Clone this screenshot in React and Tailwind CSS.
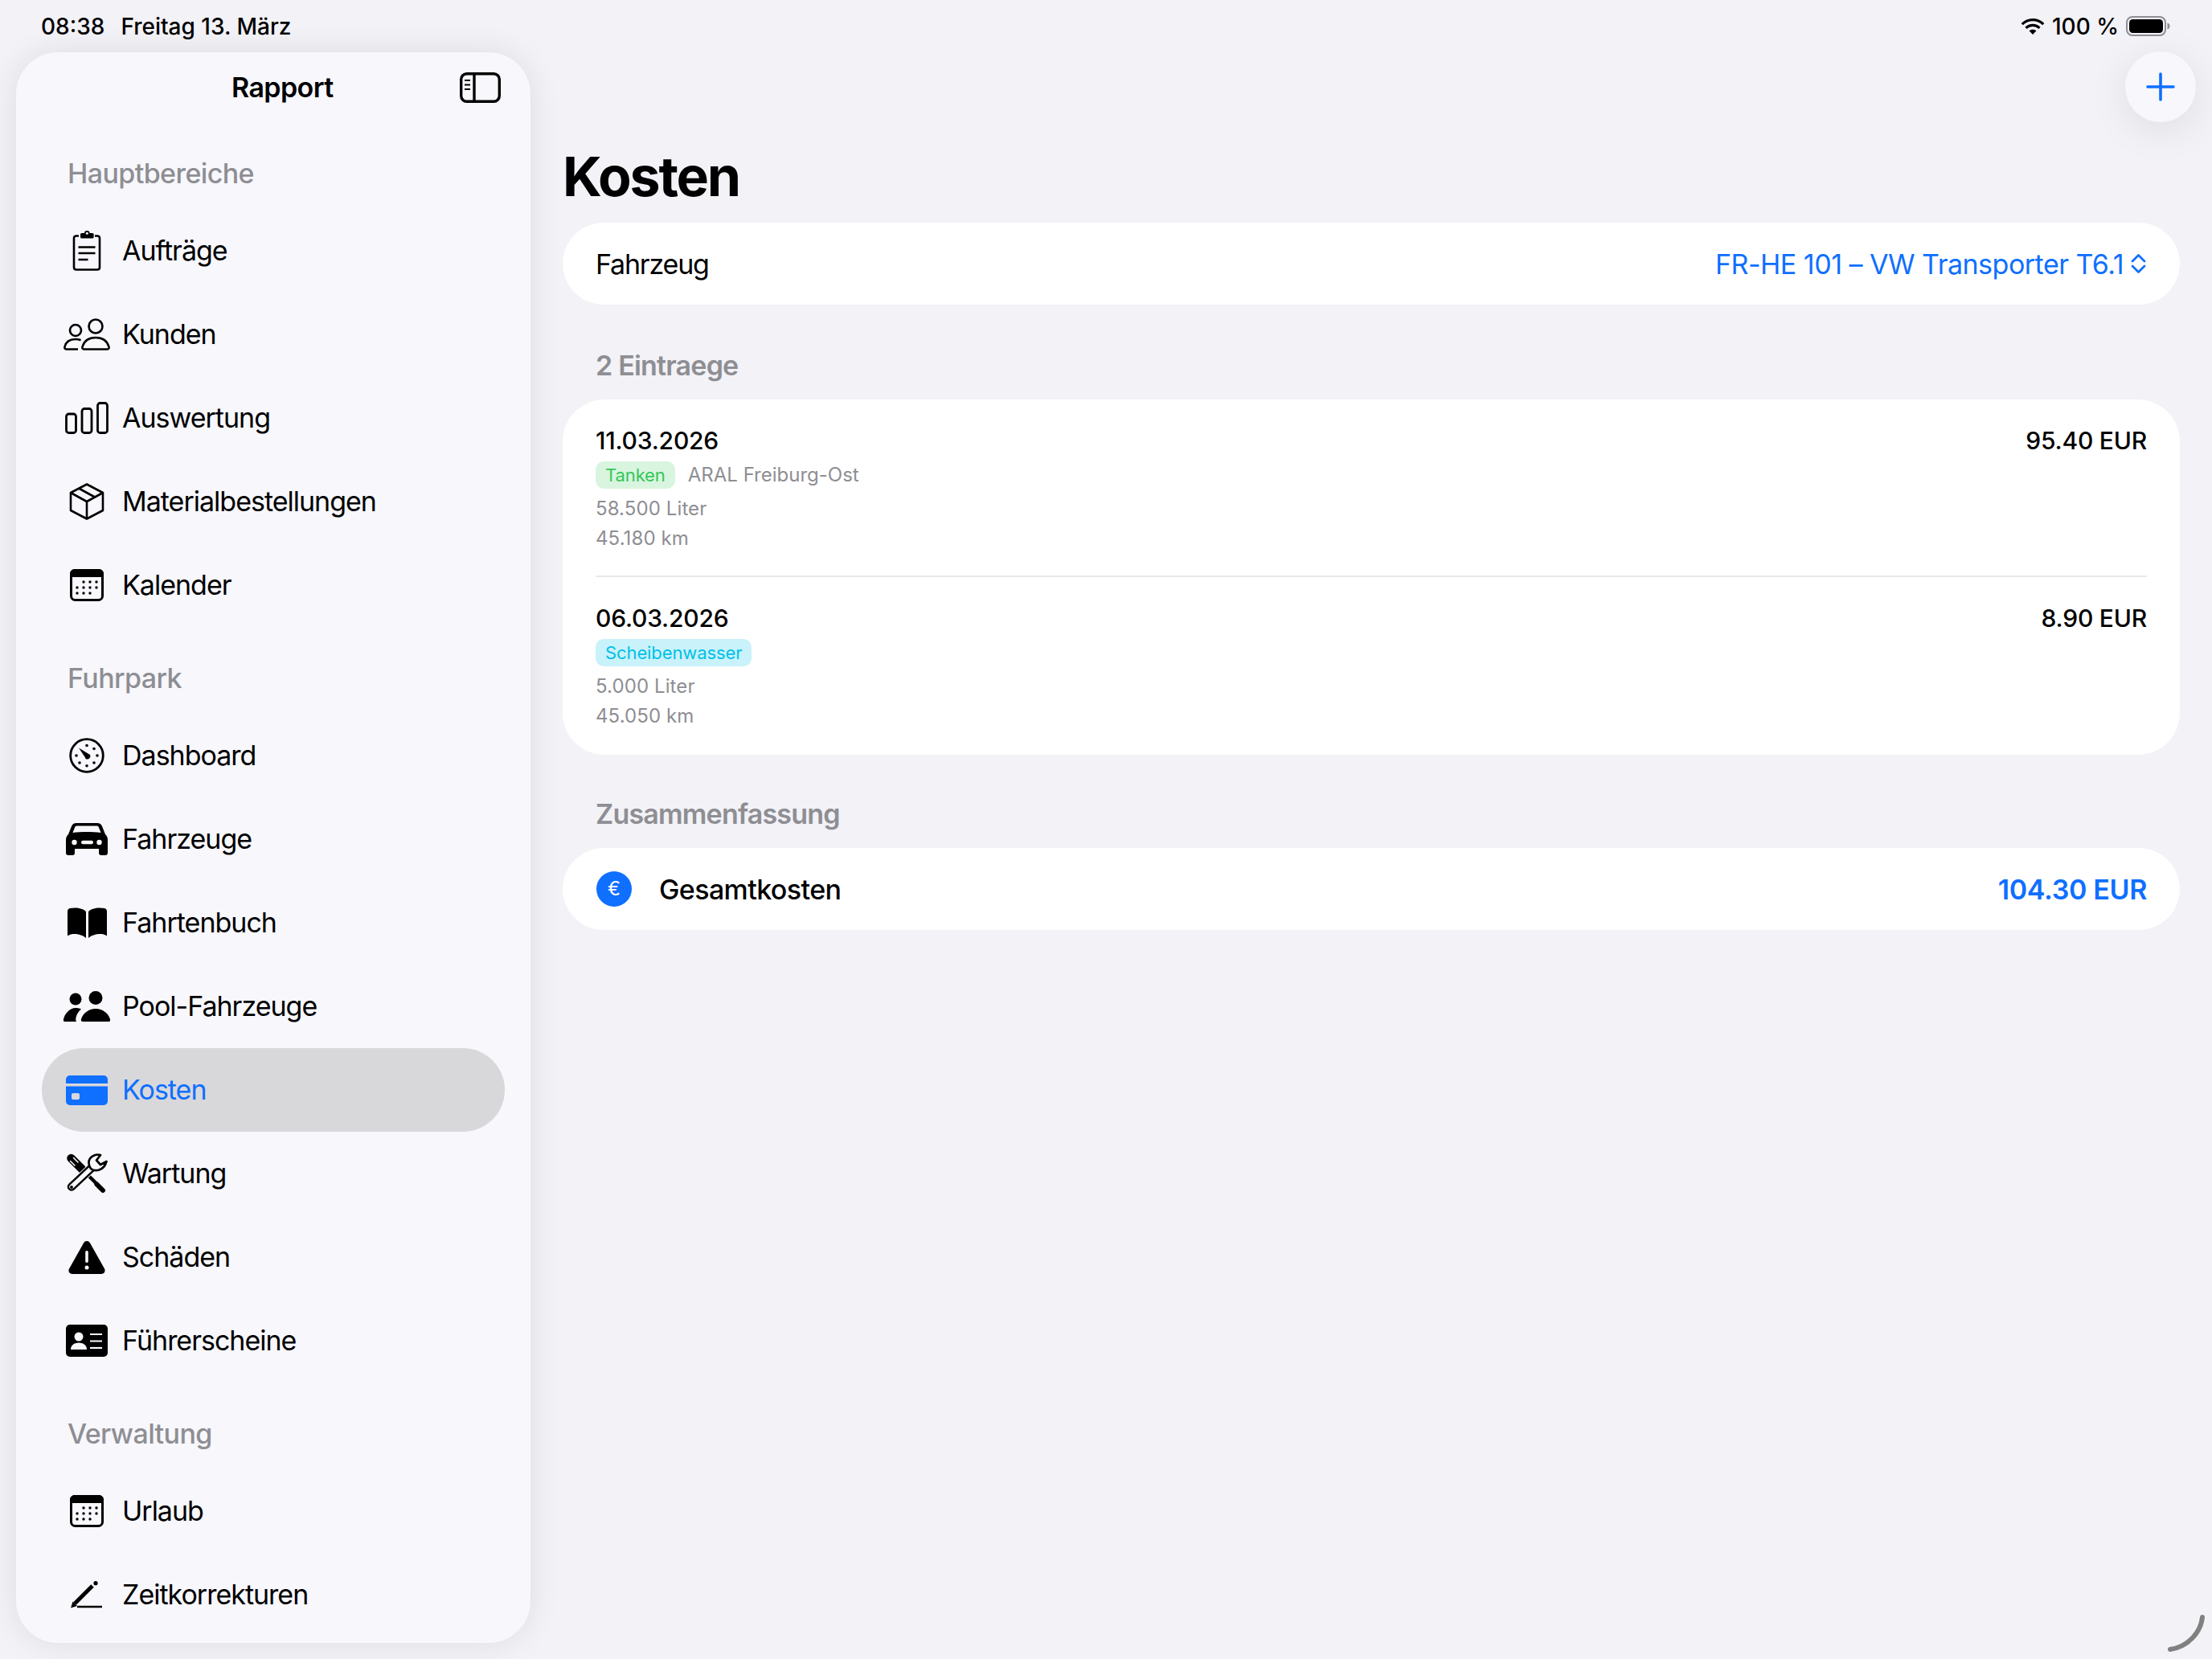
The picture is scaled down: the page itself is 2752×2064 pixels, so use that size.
import { Fragment } from "react";

const sidebarBg = "#f7f7fc";

const ClipboardIcon = () => (
  <svg width="36" height="50" viewBox="0 0 36 50" fill="none" stroke="#000" strokeWidth="2.6">
    <path d="M8 6.500H5C3 6.500 2 7.500 2 9.500V45.500C2 47.500 3 48.500 5 48.500H31C33 48.500 34 47.500 34 45.500V9.500C34 7.500 33 6.500 31 6.500H28" />
    <rect x="10" y="3" width="16.600" height="6.500" rx="1.500" fill="#000" stroke="none" />
    <circle cx="18.300" cy="3.300" r="3.300" fill="#000" stroke="none" />
    <circle cx="18.300" cy="3.300" r="1.500" fill={sidebarBg} stroke="none" />
    <path d="M7.500 20.500H28.500M7.500 28H28.500M7.500 36H19.500" strokeWidth="2.300" />
  </svg>
);

const PeopleIcon = () => (
  <svg width="60" height="40" viewBox="0 0 60 40" fill="none" stroke="#000" strokeWidth="2.6">
    <circle cx="16" cy="15" r="7" />
    <circle cx="41" cy="10" r="8.500" />
    <path d="M27 38.500H55c2 0 3-1 2.500-3C55 27 48 24 41 24s-14 3-16.500 11.500c-.5 2 .5 3 2.500 3z" />
    <path d="M19 38.500H5c-2 0-3-1-2.500-3C4 29 9 26 16 26c2.500 0 4.500.4 6.500 1.200" />
  </svg>
);

const BarsIcon = () => (
  <svg width="54" height="40" viewBox="0 0 54 40" fill="none" stroke="#000" strokeWidth="2.8">
    <rect x="1.500" y="15" width="12" height="23.500" rx="3" />
    <rect x="21" y="8.500" width="12" height="30" rx="3" />
    <rect x="40.500" y="1.500" width="12" height="37" rx="3" />
  </svg>
);

const BoxIcon = () => (
  <svg width="44" height="46" viewBox="0 0 44 46" fill="none" stroke="#000" strokeWidth="2.6" strokeLinejoin="round">
    <path d="M22 1.500L42 12V34L22 44.500L2 34V12Z" />
    <path d="M2 12L22 23L42 12M22 23V44.500M12 6.500L32 17.500" />
  </svg>
);

const CalendarIcon = () => {
  const dots = [
    [17, 16], [25, 16], [33, 16],
    [9, 23], [17, 23], [25, 23], [33, 23],
    [9, 30], [17, 30], [25, 30],
  ];
  return (
    <svg width="42" height="40" viewBox="0 0 42 40" fill="none">
      <rect x="1.500" y="1.500" width="39" height="37" rx="5" stroke="#000" strokeWidth="3" />
      <path d="M6 0H36C39.500 0 42 2.500 42 6V10H0V6C0 2.500 2.500 0 6 0Z" fill="#000" />
      {dots.map(([x, y], i) => (
        <circle key={i} cx={x} cy={y} r="1.700" fill="#000" />
      ))}
    </svg>
  );
};

const GaugeIcon = () => {
  const dots = [
    [22, 9.500], [31, 13.500], [35, 22], [31, 31], [22, 34.700], [13, 31], [9, 22],
  ];
  return (
    <svg width="44" height="44" viewBox="0 0 44 44" fill="none">
      <circle cx="22" cy="22" r="20.300" stroke="#000" strokeWidth="2.800" />
      <path d="M12 12.500L26 21C27 23 26 26 23 26.500C21 27 20 25.500 20 24.500Z" fill="#000" />
      {dots.map(([x, y], i) => (
        <circle key={i} cx={x} cy={y} r="1.800" fill="#000" />
      ))}
    </svg>
  );
};

const CarIcon = () => (
  <svg width="52" height="40" viewBox="0 0 52 40">
    <path
      d="M13 0h26c3 0 5 1.500 6 4l4 10c2 2 3 4 3 7v16c0 2-1 3-3 3h-5c-2 0-3-1-3-3v-5H11v5c0 2-1 3-3 3H3c-2 0-3-1-3-3V21c0-3 1-5 3-7l4-10c1-2.500 3-4 6-4z"
      fill="#000"
    />
    <path
      d="M14 3.500h24c1.500 0 2.500.5 3 2l2.500 6.500c-5-.6-12-1-17.500-1s-12.500.4-17.500 1L11 5.500c.5-1.500 1.500-2 3-2z"
      fill={sidebarBg}
    />
    <circle cx="10.500" cy="24" r="3.200" fill={sidebarBg} />
    <circle cx="41.500" cy="24" r="3.200" fill={sidebarBg} />
    <rect x="19" y="21.800" width="15" height="4.500" rx="2.200" fill={sidebarBg} />
  </svg>
);

const BookIcon = () => {
  const page = "M23 5v33c-3-3-9-5-15-5-3 0-5 .5-7 2-.6.4-1 0-1-1V5C0 3 1 1.500 3 1c8-1.500 16 0 20 4z";
  return (
    <svg width="49" height="39" viewBox="0 0 49 39">
      <path d={page} fill="#000" />
      <path d={page} fill="#000" transform="translate(49,0) scale(-1,1)" />
    </svg>
  );
};

const PeopleFillIcon = () => (
  <svg width="58" height="38" viewBox="0 0 58 38">
    <circle cx="15" cy="10" r="7.500" fill="#000" />
    <circle cx="40" cy="8.500" r="8.500" fill="#000" />
    <path d="M24 38c-2 0-2.500-1.500-2-3 2-7 9-13 18-13s16 6 18 13c.5 1.500 0 3-2 3z" fill="#000" />
    <path d="M16 38H2c-2 0-2.500-1.500-2-3 1.500-7 8-14 15-14 3 0 5 .5 7 1.500-3 2.500-5.500 6-6.500 10.500-.5 2 0 4 .5 5z" fill="#000" />
  </svg>
);

const CardIcon = () => (
  <svg width="52" height="37" viewBox="0 0 52 37">
    <rect width="52" height="37" rx="5" fill="#0f6fff" />
    <rect y="10" width="52" height="3.500" fill="#d8d8da" />
    <rect x="7" y="22" width="10" height="8" rx="2" fill="#d8d8da" />
  </svg>
);

const ToolsIcon = () => (
  <svg width="52" height="50" viewBox="0 0 52 50" fill="none">
    <path d="M6.500 6L20 19.500" stroke="#000" strokeWidth="10.500" strokeLinecap="round" />
    <path d="M5.500 9.500L11 15M9.500 5.500L15 11" stroke={sidebarBg} strokeWidth="1.600" strokeLinecap="round" />
    <path d="M20 19.500L39 38.500" stroke="#000" strokeWidth="4.500" />
    <path d="M38.500 38.500L46 46" stroke="#000" strokeWidth="6" strokeLinecap="round" />
    <path d="M7 41.500L31 19" stroke={sidebarBg} strokeWidth="12" strokeLinecap="round" />
    <path d="M7 41.500L31 19" stroke="#000" strokeWidth="10.500" strokeLinecap="round" />
    <path d="M7 41.500L31 19" stroke={sidebarBg} strokeWidth="5.500" strokeLinecap="round" />
    <path
      d="M43 2C36 0 28 5 28.500 12C28.500 15 29.500 17 31 19C36 23 47 22 50.500 10L43 14L38 8.500Z"
      fill={sidebarBg}
      stroke="#000"
      strokeWidth="2.700"
      strokeLinejoin="round"
    />
    <circle cx="7" cy="42" r="1.900" fill="#000" />
  </svg>
);

const WarningIcon = () => (
  <svg width="46" height="41" viewBox="0 0 46 41">
    <path
      d="M23 0c1.800 0 3 .8 4 2.500l18 32c1.500 3 0 6.500-4 6.500H5c-4 0-5.500-3.500-4-6.500l18-32C20 .8 21.200 0 23 0z"
      fill="#000"
    />
    <rect x="21.200" y="12" width="3.600" height="15" rx="1.800" fill={sidebarBg} />
    <circle cx="23" cy="33" r="2.500" fill={sidebarBg} />
  </svg>
);

const LicenseIcon = () => (
  <svg width="52" height="40" viewBox="0 0 52 40">
    <rect width="52" height="40" rx="5" fill="#000" />
    <circle cx="16" cy="15" r="5.500" fill={sidebarBg} />
    <path d="M6 31c0-5 4-8.500 10-8.500s10 3.500 10 8.500z" fill={sidebarBg} />
    <path d="M30 12H45M30 20.500H45" stroke={sidebarBg} strokeWidth="2.200" />
    <path d="M30 29H45" stroke={sidebarBg} strokeWidth="2.200" />
  </svg>
);

const PencilLineIcon = () => (
  <svg width="40" height="34" viewBox="0 0 40 34" fill="none">
    <path d="M5 28L27 6" stroke="#000" strokeWidth="5" />
    <circle cx="31" cy="2.700" r="2.600" fill="#000" />
    <path d="M0 33.500L2.500 25.500L8 31Z" fill="#000" />
    <path d="M8 32H39" stroke="#000" strokeWidth="2.500" />
  </svg>
);

const ToggleIcon = () => (
  <svg width="51" height="38" viewBox="0 0 51 38" fill="none" stroke="#000" strokeWidth="3.400">
    <rect x="1.700" y="1.700" width="47.600" height="34.600" rx="7" />
    <path d="M18 2V36" />
    <path d="M6 10H13M6 15.500H13M6 21H13" strokeWidth="2.200" />
  </svg>
);

const WifiIcon = () => (
  <svg width="30" height="20" viewBox="0 0 30 20" fill="none" stroke="#000" strokeWidth="3.200">
    <path d="M1.800 7.200C9.200-.2 20.800-.2 28.200 7.200" />
    <path d="M6.500 11.800C11.200 7.200 18.800 7.200 23.500 11.800" />
    <path d="M15 20L10.500 15.300C13 13.200 17 13.200 19.500 15.300Z" fill="#000" stroke="none" />
  </svg>
);

const BatteryIcon = () => (
  <svg width="55" height="25" viewBox="0 0 55 25">
    <rect x="1" y="1" width="48" height="23" rx="7" fill="none" stroke="#8e8e93" strokeWidth="2" />
    <rect x="4" y="4" width="42" height="17" rx="4.500" fill="#000" />
    <path d="M51.500 8.500C53.500 9 54.500 10.500 54.500 12.500S53.500 16 51.500 16.500Z" fill="#8e8e93" />
  </svg>
);

const sections = [
  {
    title: "Hauptbereiche",
    items: [
      { label: "Aufträge", icon: <ClipboardIcon /> },
      { label: "Kunden", icon: <PeopleIcon /> },
      { label: "Auswertung", icon: <BarsIcon /> },
      { label: "Materialbestellungen", icon: <BoxIcon /> },
      { label: "Kalender", icon: <CalendarIcon /> },
    ],
  },
  {
    title: "Fuhrpark",
    items: [
      { label: "Dashboard", icon: <GaugeIcon /> },
      { label: "Fahrzeuge", icon: <CarIcon /> },
      { label: "Fahrtenbuch", icon: <BookIcon /> },
      { label: "Pool-Fahrzeuge", icon: <PeopleFillIcon /> },
      { label: "Kosten", icon: <CardIcon />, active: true },
      { label: "Wartung", icon: <ToolsIcon /> },
      { label: "Schäden", icon: <WarningIcon /> },
      { label: "Führerscheine", icon: <LicenseIcon /> },
    ],
  },
  {
    title: "Verwaltung",
    items: [
      { label: "Urlaub", icon: <CalendarIcon /> },
      { label: "Zeitkorrekturen", icon: <PencilLineIcon /> },
    ],
  },
];

const entries = [
  {
    date: "11.03.2026",
    amount: "95.40 EUR",
    tag: "Tanken",
    tagClass: "bg-[#d9f5df] text-[#34c759]",
    place: "ARAL Freiburg-Ost",
    liters: "58.500 Liter",
    km: "45.180 km",
  },
  {
    date: "06.03.2026",
    amount: "8.90 EUR",
    tag: "Scheibenwasser",
    tagClass: "bg-[#c9f2fa] text-[#00c0e8]",
    liters: "5.000 Liter",
    km: "45.050 km",
  },
];

const NavRow = ({ item }) => (
  <div
    className={`mx-[32px] flex h-[104px] items-center gap-[12px] rounded-full pl-[24px] ${
      item.active ? "bg-[#d8d8da] text-[#0f6fff]" : "text-black"
    }`}
  >
    <div className="flex w-[64px] shrink-0 items-center justify-center">{item.icon}</div>
    <span className="text-[34px] leading-[44px] tracking-[-1px]">{item.label}</span>
  </div>
);

const Sidebar = () => (
  <aside className="h-[1979px] w-[640px] shrink-0 overflow-hidden rounded-[52px] bg-[#f7f7fc] shadow-[0_0_40px_rgba(0,0,0,0.09)]">
    <div className="flex h-[87px] items-center justify-between pr-[37px] pl-[268px]">
      <span className="text-[34px] leading-[44px] font-semibold tracking-[-0.6px] text-black">Rapport</span>
      <ToggleIcon />
    </div>
    {sections.map((section) => (
      <Fragment key={section.title}>
        <div className="h-[108px] pt-[42px] pl-[64px] text-[34px] leading-[44px] font-medium tracking-[-0.6px] text-[#8e8e93]">
          {section.title}
        </div>
        {section.items.map((item) => (
          <NavRow key={item.label} item={item} />
        ))}
      </Fragment>
    ))}
  </aside>
);

const SectionTitle = ({ children, className }) => (
  <h2 className={`mb-[20px] pl-[41px] text-[34px] leading-[44px] font-semibold tracking-[-0.8px] text-[#8e8e93] ${className}`}>
    {children}
  </h2>
);

const EntryRow = ({ entry }) => (
  <div className="mx-[41px] border-[#e8e8ea] pt-[32px] pb-[30px] first:border-b-2 first:pb-[28px]">
    <div className="flex h-[38px] items-center justify-between text-[30px] font-medium tracking-[-0.2px] text-black">
      <span>{entry.date}</span>
      <span>{entry.amount}</span>
    </div>
    <div className="mt-[7px] flex h-[34px] items-center gap-[16px]">
      <span className={`flex h-[34px] items-center rounded-[10px] px-[12px] text-[22px] tracking-[-0.1px] ${entry.tagClass}`}>{entry.tag}</span>
      {entry.place && <span className="text-[24px] text-[#8e8e93]">{entry.place}</span>}
    </div>
    <div className="mt-[6px] text-[24px] leading-[37px] tracking-[0.1px] text-[#8e8e93]">
      <div>{entry.liters}</div>
      <div>{entry.km}</div>
    </div>
  </div>
);

const App = () => (
  <div className="relative h-[2064px] w-[2752px] overflow-hidden bg-[#f2f2f7] font-[Inter,sans-serif]">
    <div className="flex h-[65px] items-center justify-between pr-[52px] pl-[51px] text-[28px] font-medium text-black">
      <div className="flex gap-[20px]">
        <span>08:38</span>
        <span>Freitag 13. März</span>
      </div>
      <div className="flex items-center gap-[9px]">
        <WifiIcon />
        <span>100 %</span>
        <BatteryIcon />
      </div>
    </div>

    <div className="flex pl-[20px]">
      <Sidebar />
      <main className="ml-[40px] w-[2012px]">
        <h1 className="mt-[113px] h-[82px] text-[68px] leading-[82px] font-bold tracking-[-2.2px] text-black">Kosten</h1>

        <div className="mt-[17px] flex h-[102px] items-center justify-between rounded-[52px] bg-white pr-[41px] pl-[41px] text-[34px]">
          <span className="tracking-[-1.2px] text-black">Fahrzeug</span>
          <span className="flex items-center gap-[8px] tracking-[-0.5px] text-[#0f6fff]">
            FR-HE 101 – VW Transporter T6.1
            <svg width="21" height="26" viewBox="0 0 21 26" fill="none" stroke="#0f6fff" strokeWidth="2.800" strokeLinecap="round" strokeLinejoin="round">
              <path d="M3 10L10.500 2.500L18 10M3 16L10.500 23.500L18 16" />
            </svg>
          </span>
        </div>

        <SectionTitle className="mt-[54px]">2 Eintraege</SectionTitle>
        <div className="rounded-[52px] bg-white">
          {entries.map((entry) => (
            <EntryRow key={entry.date} entry={entry} />
          ))}
        </div>

        <SectionTitle className="mt-[52px]">Zusammenfassung</SectionTitle>
        <div className="flex h-[102px] items-center justify-between rounded-[52px] bg-white pr-[41px] pl-[42px] text-[34px]">
          <div className="flex items-center gap-[34px]">
            <span className="flex h-[44px] w-[44px] items-center justify-center rounded-full bg-[#0f6fff] text-[24px] font-normal text-white">
              €
            </span>
            <span className="font-medium tracking-[-0.6px] text-black">Gesamtkosten</span>
          </div>
          <span className="font-semibold tracking-[-0.35px] text-[#0f6fff]">104.30 EUR</span>
        </div>
      </main>
    </div>

    <button className="absolute top-[64px] right-[20px] flex h-[88px] w-[88px] items-center justify-center rounded-full bg-[#f7f7fc] shadow-[0_10px_50px_rgba(0,0,0,0.09)]">
      <svg width="36" height="36" viewBox="0 0 36 36" fill="none" stroke="#0f6fff" strokeWidth="3.600" strokeLinecap="round">
        <path d="M18 2V34M2 18H34" />
      </svg>
    </button>

    <svg className="absolute right-[9px] bottom-[9px]" width="46" height="46" viewBox="0 0 46 46" fill="none">
      <path d="M43 3C41 22 25 40 3 43" stroke="#808080" strokeWidth="6" strokeLinecap="round" />
    </svg>
  </div>
);

export default App;
